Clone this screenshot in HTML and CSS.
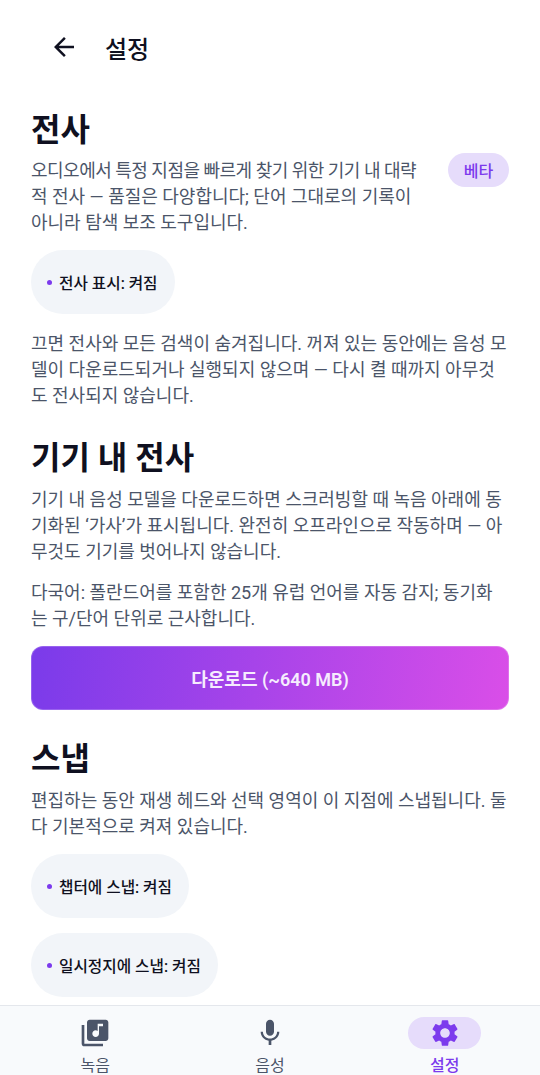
FILE: index.html
```html
<!DOCTYPE html>
<html lang="ko">
<head>
  <meta charset="UTF-8">
  <meta name="viewport" content="width=device-width, initial-scale=1.0">
  <title>설정</title>
  <link rel="stylesheet" href="styles.css">
</head>
<body>
  <div class="screen">
    <header class="topbar">
      <svg class="back" viewBox="0 0 24 24"><path d="M20 11H7.830l5.590-5.590L12 4l-8 8 8 8 1.410-1.410L7.830 13H20z"/></svg>
      <div class="title">설정</div>
    </header>

    <main class="content">
      <h2 class="first">전사</h2>
      <div class="row">
        <p class="desc"><span class="tight">오디오에서 특정 지점을 빠르게 찾기 위한 기기 내 대략</span><br>적 전사 — 품질은 다양합니다; 단어 그대로의 기록이<br>아니라 탐색 보조 도구입니다.</p>
        <span class="badge">베타</span>
      </div>
      <div class="chip"><i class="dot"></i>전사 표시: 켜짐</div>
      <p class="desc after-chip">끄면 전사와 모든 검색이 숨겨집니다. 꺼져 있는 동안에는 음성 모<br>델이 다운로드되거나 실행되지 않으며 — 다시 켤 때까지 아무것<br>도 전사되지 않습니다.</p>

      <h2>기기 내 전사</h2>
      <p class="desc">기기 내 음성 모델을 다운로드하면 스크러빙할 때 녹음 아래에 동<br>기화된 ‘가사’가 표시됩니다. 완전히 오프라인으로 작동하며 — 아<br>무것도 기기를 벗어나지 않습니다.</p>
      <p class="desc second">다국어: 폴란드어를 포함한 25개 유럽 언어를 자동 감지; 동기화<br>는 구/단어 단위로 근사합니다.</p>
      <button class="download">다운로드 (~640 MB)</button>

      <h2>스냅</h2>
      <p class="desc">편집하는 동안 재생 헤드와 선택 영역이 이 지점에 스냅됩니다. 둘<br>다 기본적으로 켜져 있습니다.</p>
      <div class="chip"><i class="dot"></i>챕터에 스냅: 켜짐</div>
      <div class="chip"><i class="dot"></i>일시정지에 스냅: 켜짐</div>
    </main>

    <nav class="tabs">
      <div class="tab">
        <span class="tab-icon">
          <svg viewBox="0 0 24 24"><path d="M20 2H8c-1.100 0-2 .9-2 2v12c0 1.100.9 2 2 2h12c1.100 0 2-.9 2-2V4c0-1.100-.9-2-2-2zm-2 5h-3v5.500c0 1.380-1.120 2.500-2.500 2.500S10 13.880 10 12.500s1.120-2.500 2.500-2.500c.57 0 1.080.19 1.500.51V5h4v2zM4 6H2v14c0 1.100.9 2 2 2h14v-2H4V6z"/></svg>
        </span>
        <span class="tab-label">녹음</span>
      </div>
      <div class="tab">
        <span class="tab-icon">
          <svg viewBox="0 0 24 24"><path d="M12 14c1.660 0 3-1.340 3-3V5c0-1.660-1.340-3-3-3S9 3.340 9 5v6c0 1.660 1.340 3 3 3zm5.300-3c0 3-2.540 5.100-5.300 5.100S6.700 14 6.700 11H5c0 3.410 2.720 6.230 6 6.720V21h2v-3.280c3.280-.48 6-3.300 6-6.720h-1.700z"/></svg>
        </span>
        <span class="tab-label">음성</span>
      </div>
      <div class="tab active">
        <span class="tab-icon">
          <svg viewBox="0 0 24 24"><path d="M19.140 12.940c.04-.3.06-.61.06-.94 0-.32-.02-.64-.07-.94l2.030-1.580c.18-.14.23-.41.12-.61l-1.920-3.320c-.12-.22-.37-.29-.59-.22l-2.390.96c-.5-.38-1.030-.7-1.620-.94l-.36-2.540c-.04-.24-.24-.41-.48-.41h-3.840c-.24 0-.43.17-.47.41l-.36 2.540c-.59.24-1.130.57-1.620.94l-2.390-.96c-.22-.08-.47 0-.59.22L2.740 8.870c-.12.21-.08.47.12.61l2.030 1.580c-.05.3-.09.63-.09.94s.02.64.07.94l-2.030 1.580c-.18.14-.23.41-.12.61l1.920 3.320c.12.22.37.29.59.22l2.390-.96c.5.38 1.030.7 1.620.94l.36 2.540c.05.24.24.41.48.41h3.840c.24 0 .44-.17.47-.41l.36-2.540c.59-.24 1.130-.56 1.620-.94l2.390.96c.22.08.47 0 .59-.22l1.920-3.320c.12-.22.07-.47-.12-.61l-2.010-1.580zM12 15.600c-1.980 0-3.600-1.620-3.600-3.600s1.620-3.600 3.600-3.600 3.600 1.620 3.600 3.600-1.620 3.600-3.600 3.600z"/></svg>
        </span>
        <span class="tab-label">설정</span>
      </div>
    </nav>
  </div>
</body>
</html>
```

FILE: styles.css
```css
* {
  box-sizing: border-box;
}

html, body {
  margin: 0;
  padding: 0;
}

body {
  background: #fff;
  font-family: Roboto, "Noto Sans CJK KR", sans-serif;
  color: #0f1020;
}

.screen {
  width: 540px;
  height: 1075px;
  overflow: hidden;
  display: flex;
  flex-direction: column;
}

/* Header */
.topbar {
  height: 94px;
  flex: none;
  display: flex;
  align-items: center;
  padding-left: 49px;
}

.back {
  width: 30px;
  height: 30px;
  fill: #0f1020;
}

.title {
  margin-left: 26px;
  font-size: 24px;
  font-weight: 500;
}

/* Content */
.content {
  flex: 1;
  min-height: 0;
  overflow: hidden;
  padding: 0 31px;
}

h2 {
  margin: 27px 0 0;
  font-size: 32px;
  line-height: 44px;
  font-weight: 700;
}

h2.first {
  margin-top: 14px;
}

.desc {
  margin: 7px 0 0;
  font-size: 18px;
  line-height: 26px;
  color: #4b5569;
  white-space: nowrap;
}

.row .desc {
  margin-top: 6px;
}

.desc.second {
  margin-top: 15px;
}

.desc.after-chip {
  margin-top: 17px;
}

.tight {
  letter-spacing: -0.5px;
}

.row {
  display: flex;
  justify-content: space-between;
  align-items: flex-start;
}

.badge {
  width: 61px;
  height: 34px;
  margin-top: 1px;
  border-radius: 17px;
  background: #e6dcfb;
  color: #7c3aed;
  font-size: 16px;
  font-weight: 500;
  display: flex;
  align-items: center;
  justify-content: center;
}

.chip {
  width: fit-content;
  height: 64px;
  margin-top: 14px;
  padding: 0 17px 0 16px;
  border-radius: 32px;
  background: #f2f5f9;
  display: flex;
  align-items: center;
  font-size: 15.700px;
  font-weight: 500;
  color: #0f1020;
}

.chip + .chip {
  margin-top: 15px;
}

.dot {
  width: 5px;
  height: 5px;
  border-radius: 50%;
  background: #7c3aed;
  margin-right: 7px;
}

.download {
  display: block;
  width: 100%;
  height: 64px;
  margin: 14px 0 1px;
  border: 1px solid rgba(255, 255, 255, 0.2);
  border-radius: 12px;
  background: linear-gradient(100deg, #7a3bea, #da4ee8) border-box;
  color: #f6ecfe;
  font-family: inherit;
  font-size: 18px;
  font-weight: 600;
}

/* Bottom navigation */
.tabs {
  flex: none;
  height: 70px;
  display: flex;
  padding: 0 8px;
  background: #f8fafc;
  border-top: 1px solid #e4e7ec;
}

.tab {
  flex: 1;
  display: flex;
  flex-direction: column;
  align-items: center;
  padding-top: 11px;
}

.tab-icon {
  width: 73px;
  height: 32px;
  border-radius: 16px;
  display: flex;
  align-items: center;
  justify-content: center;
}

.tab-icon svg {
  width: 32px;
  height: 32px;
  fill: #4b5569;
}

.tab-label {
  margin-top: 5px;
  font-size: 16px;
  line-height: 24px;
  color: #4b5569;
}

.tab.active .tab-icon {
  background: #e6dcfb;
}

.tab.active .tab-icon svg {
  fill: #7c3aed;
}

.tab.active .tab-label {
  color: #7c3aed;
  font-weight: 500;
}
```
